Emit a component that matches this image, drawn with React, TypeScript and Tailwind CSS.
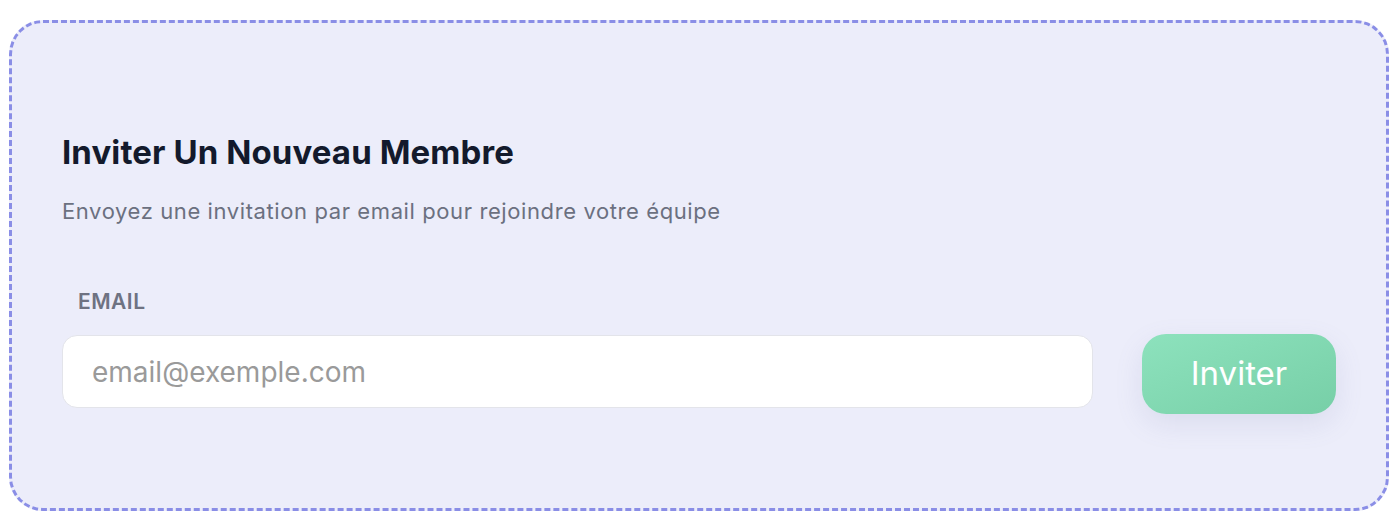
import React from "react";

export default function App() {
  return (
    <div
      className="w-[1398px] h-[524px] bg-white pt-[20px] pl-[9px]"
      style={{ fontFamily: "Inter, 'Noto Sans', sans-serif" }}
    >
      <div className="w-[1380px] h-[491px] rounded-[34px] border-[3px] border-dashed border-[#8a8ee6] bg-[#ecedfa] px-[50px] pt-[109px]">
        <h2 className="text-[33px] leading-[40px] font-bold tracking-[0.1px] text-[#131a2c]">
          Inviter Un Nouveau Membre
        </h2>
        <p className="mt-[25px] text-[22px] leading-[28px] tracking-[0.6px] text-[#6b7080]">
          Envoyez une invitation par email pour rejoindre votre équipe
        </p>
        <label className="block mt-[63px] pl-[16px] text-[21px] leading-[28px] font-semibold tracking-[0.5px] text-[#6e7282]">
          EMAIL
        </label>
        <div className="mt-[18px] flex items-start gap-[49px]">
          <input
            type="email"
            placeholder="email@exemple.com"
            className="mt-[1px] flex-1 h-[73px] rounded-[15px] border border-[#e3e4ea] bg-white pl-[29px] text-[28px] text-[#333] placeholder:text-[#9a9a9a] outline-none"
            style={{ fontFamily: "Inter, 'Noto Sans', sans-serif" }}
          />
          <button
            className="w-[194px] h-[80px] rounded-[24px] bg-gradient-to-br from-[#8de2bd] to-[#77cfa7] text-white text-[33px] shadow-[0_10px_28px_rgba(110,120,170,0.14)]"
            style={{ fontFamily: "Inter, 'Noto Sans', sans-serif" }}
          >
            Inviter
          </button>
        </div>
      </div>
    </div>
  );
}
